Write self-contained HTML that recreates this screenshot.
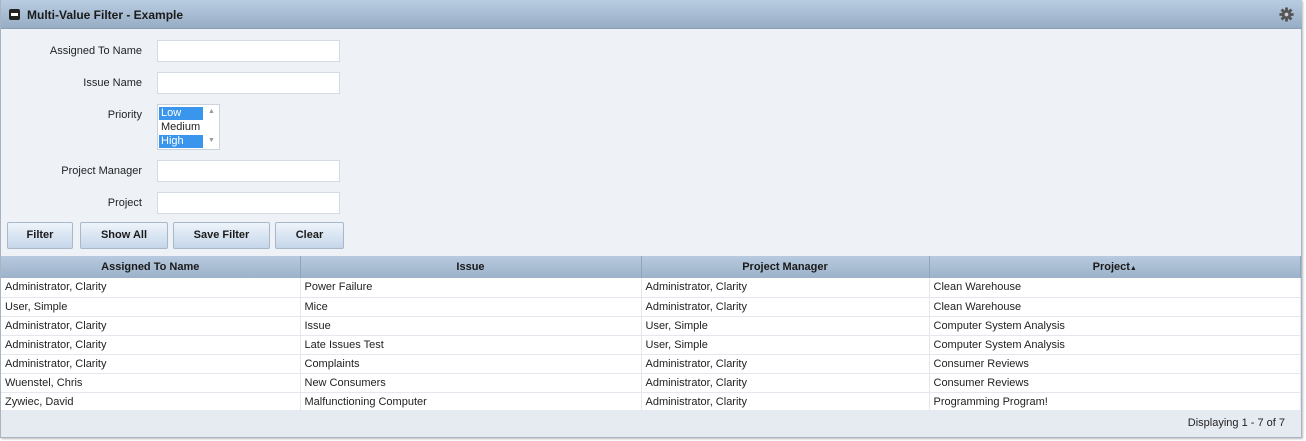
<!DOCTYPE html>
<html><head><style>
*{box-sizing:border-box;margin:0;padding:0}
body{width:1306px;height:441px;background:#fff;font-family:"Liberation Sans",Arial,sans-serif;font-size:11px;color:#222;position:relative;overflow:hidden}
.panel{position:absolute;left:0;top:0;width:1302px;height:438px;background:#eef2f7;border:1px solid #a8b4c2;border-top:none;box-shadow:1px 1px 2px #bbb}
.hdr{position:absolute;left:0;top:0;width:1301px;height:29px;background:linear-gradient(#b9cde2,#97adc4);border-bottom:1px solid #8a9fb5}
.hdr .t{position:absolute;left:26px;top:8px;font-weight:bold;font-size:12px;color:#1a1a1a}
.hdr .mi{position:absolute;left:8px;top:9px;width:11px;height:11px;background:#222;border-radius:2px}
.hdr .mi:after{content:"";position:absolute;left:2px;top:4px;width:7px;height:3px;background:#fff}
.lbl{position:absolute;right:1159px;font-size:11px;color:#222;text-align:right;white-space:nowrap}
.in{position:absolute;left:156px;width:183px;height:22px;background:#fff;border:1px solid #d5dbe3}
.lb{position:absolute;left:156px;top:104px;width:63px;height:46px;background:#fff;border:1px solid #ccd2da}
.lb div{position:absolute;left:1px;width:44px;height:13px;line-height:13px;padding-left:2px}
.sel{background:#3a96ec;color:#fff}
.btn{position:absolute;top:222px;height:27px;border:1px solid #a9b8c9;border-radius:2px;background:linear-gradient(#eef4fb,#c5d6ea);font-weight:bold;text-align:center;line-height:25px;color:#1a1a1a}
table{position:absolute;left:0;top:256px;width:1300px;border-collapse:collapse;table-layout:fixed}
th{height:22px;background:linear-gradient(#b7cadf,#9cb2c9);font-weight:bold;border-right:1px solid #8fa5bc;color:#1a1a1a}
td{height:19px;background:#fff;border-bottom:1px solid #e4e8ee;border-right:1px solid #e4e8ee;padding-left:4px;white-space:nowrap}
.ft{position:absolute;left:0;top:410px;width:1300px;height:27px;background:#e6eaf1;text-align:right;padding-right:16px;line-height:27px}
</style></head><body>
<div class="panel">
<div class="hdr"><div class="mi"></div><div class="t">Multi-Value Filter - Example</div>
<svg style="position:absolute;left:1278px;top:7px" width="15" height="15" viewBox="0 0 16 16"><g fill="#555"><circle cx="8" cy="8" r="5"/><rect x="6.5" y="0.5" width="3" height="15"/><rect x="0.5" y="6.5" width="15" height="3"/><rect x="6.5" y="0.5" width="3" height="15" transform="rotate(45 8 8)"/><rect x="6.5" y="0.5" width="3" height="15" transform="rotate(-45 8 8)"/></g><circle cx="8" cy="8" r="2" fill="#ccd"/></svg></div>
<div class="lbl" style="top:45px">Assigned To Name</div><div class="in" style="top:40px"></div>
<div class="lbl" style="top:77px">Issue Name</div><div class="in" style="top:72px"></div>
<div class="lbl" style="top:109px">Priority</div>
<div class="lb"><div class="sel" style="top:2px">Low</div><div style="top:16px">Medium</div><div class="sel" style="top:30px">High</div>
<span style="position:absolute;left:50px;top:3px;color:#999;font-size:7px">▲</span><span style="position:absolute;left:50px;top:32px;color:#999;font-size:7px">▼</span></div>
<div class="lbl" style="top:165px">Project Manager</div><div class="in" style="top:160px"></div>
<div class="lbl" style="top:197px">Project</div><div class="in" style="top:192px"></div>
<div class="btn" style="left:6px;width:66px">Filter</div>
<div class="btn" style="left:79px;width:88px">Show All</div>
<div class="btn" style="left:172px;width:97px">Save Filter</div>
<div class="btn" style="left:274px;width:69px">Clear</div>
<table>
<colgroup><col style="width:299px"><col style="width:341px"><col style="width:288px"><col></colgroup>
<tr><th>Assigned To Name</th><th>Issue</th><th>Project Manager</th><th>Project<span style="font-size:7px">▲</span></th></tr>
<tr><td>Administrator, Clarity</td><td>Power Failure</td><td>Administrator, Clarity</td><td>Clean Warehouse</td></tr>
<tr><td>User, Simple</td><td>Mice</td><td>Administrator, Clarity</td><td>Clean Warehouse</td></tr>
<tr><td>Administrator, Clarity</td><td>Issue</td><td>User, Simple</td><td>Computer System Analysis</td></tr>
<tr><td>Administrator, Clarity</td><td>Late Issues Test</td><td>User, Simple</td><td>Computer System Analysis</td></tr>
<tr><td>Administrator, Clarity</td><td>Complaints</td><td>Administrator, Clarity</td><td>Consumer Reviews</td></tr>
<tr><td>Wuenstel, Chris</td><td>New Consumers</td><td>Administrator, Clarity</td><td>Consumer Reviews</td></tr>
<tr><td>Zywiec, David</td><td>Malfunctioning Computer</td><td>Administrator, Clarity</td><td>Programming Program!</td></tr>
</table>
<div class="ft">Displaying 1 - 7 of 7</div>
</div>
</body></html>
